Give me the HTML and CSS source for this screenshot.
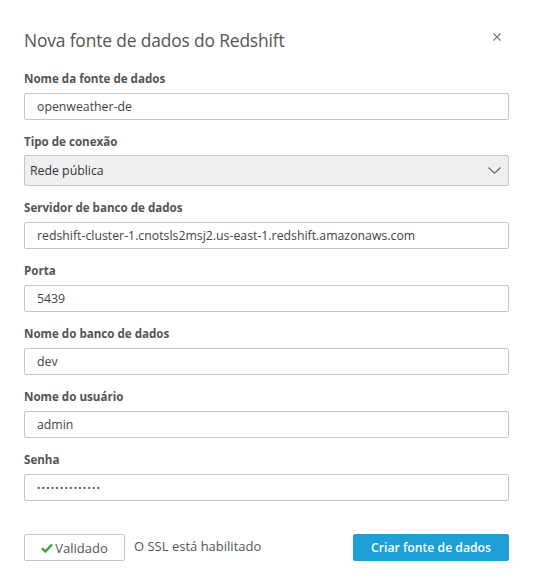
FILE: index.html
```html
<!DOCTYPE html>
<html lang="pt">
<head>
<meta charset="utf-8">
<link rel="stylesheet" href="styles.css">
</head>
<body>
<div class="dialog">
  <div class="header">
    <h1 class="title">Nova fonte de dados do Redshift</h1>
    <span class="close">
      <svg width="8" height="8" viewBox="0 0 8 8"><path d="M0.5 0.5L7.5 7.5M7.5 0.5L0.5 7.5" stroke="#777" stroke-width="1.1" fill="none"/></svg>
    </span>
  </div>
  <div class="form">
    <div class="field">
      <label class="label">Nome da fonte de dados</label>
      <div class="input">openweather-de</div>
    </div>
    <div class="field field-select">
      <label class="label">Tipo de conexão</label>
      <div class="select">
        <span>Rede pública</span>
        <svg class="chev" width="13" height="7" viewBox="0 0 13 7"><path d="M0.5 0.5L6.5 6.2L12.5 0.5" stroke="#666" stroke-width="1.1" fill="none"/></svg>
      </div>
    </div>
    <div class="field">
      <label class="label">Servidor de banco de dados</label>
      <div class="input">redshift-cluster-1.cnotsls2msj2.us-east-1.redshift.amazonaws.com</div>
    </div>
    <div class="field">
      <label class="label">Porta</label>
      <div class="input">5439</div>
    </div>
    <div class="field">
      <label class="label">Nome do banco de dados</label>
      <div class="input">dev</div>
    </div>
    <div class="field">
      <label class="label">Nome do usuário</label>
      <div class="input">admin</div>
    </div>
    <div class="field">
      <label class="label">Senha</label>
      <div class="input password">••••••••••••••</div>
    </div>
  </div>
  <div class="footer">
    <div class="footer-left">
      <div class="btn-validated">
        <svg width="12" height="10" viewBox="0 0 12 10"><path d="M1 5.2L4.3 8.5L11 1.5" stroke="#2ea82e" stroke-width="2.4" fill="none"/></svg>
        <span>Validado</span>
      </div>
      <span class="ssl">O SSL está habilitado</span>
    </div>
    <div class="btn-primary">Criar fonte de dados</div>
  </div>
</div>
</body>
</html>
```
FILE: styles.css
```css
html, body {
  margin: 0;
  padding: 0;
  background: #fff;
}
body {
  font-family: "Open Sans", "Noto Sans", sans-serif;
  color: #555;
}
.dialog {
  width: 535px;
  box-sizing: border-box;
  padding: 28px 26px 0 24px;
  display: flex;
  flex-direction: column;
}
.header {
  display: flex;
  justify-content: space-between;
  align-items: center;
  height: 24px;
}
.title {
  margin: 0;
  font-size: 17.4px;
  font-weight: 400;
  line-height: 24px;
  color: #555;
  letter-spacing: -0.15px;
}
.close {
  display: flex;
  margin-right: 8px;
  margin-top: -6px;
}
.form {
  display: flex;
  flex-direction: column;
  gap: 14px;
  margin-top: 19px;
}
.field {
  display: flex;
  flex-direction: column;
  gap: 6px;
}
.label {
  font-size: 11.6px;
  font-weight: 700;
  line-height: 16px;
  color: #545454;
}
.input {
  height: 27px;
  box-sizing: border-box;
  border: 1px solid #c6c6c6;
  border-radius: 2px;
  padding: 0 12px;
  display: flex;
  align-items: center;
  font-size: 12.3px;
  color: #444;
  background: #fff;
}
.password {
  font-size: 9px;
  letter-spacing: 1.2px;
}
.field-select {
  gap: 5px;
}
.select {
  height: 31px;
  box-sizing: border-box;
  border: 1px solid #c6c6c6;
  border-radius: 2px;
  background: #efefef;
  padding: 0 7px 0 5px;
  display: flex;
  align-items: center;
  justify-content: space-between;
  font-size: 12.3px;
  color: #333;
}
.footer {
  margin-top: 33px;
  display: flex;
  justify-content: space-between;
  align-items: center;
}
.footer-left {
  display: flex;
  align-items: center;
  gap: 9px;
}
.btn-validated {
  width: 101px;
  height: 27px;
  box-sizing: border-box;
  border: 1px solid #c6c6c6;
  border-radius: 2px;
  display: flex;
  align-items: center;
  justify-content: center;
  gap: 2px;
  font-size: 13px;
  color: #555;
}
.ssl {
  font-size: 13px;
  color: #555;
  margin-top: -4px;
}
.btn-primary {
  width: 156px;
  height: 27px;
  box-sizing: border-box;
  background: #1f9fd8;
  border-radius: 2px;
  color: #fff;
  font-size: 12.2px;
  font-weight: 600;
  display: flex;
  align-items: center;
  justify-content: center;
}
```
